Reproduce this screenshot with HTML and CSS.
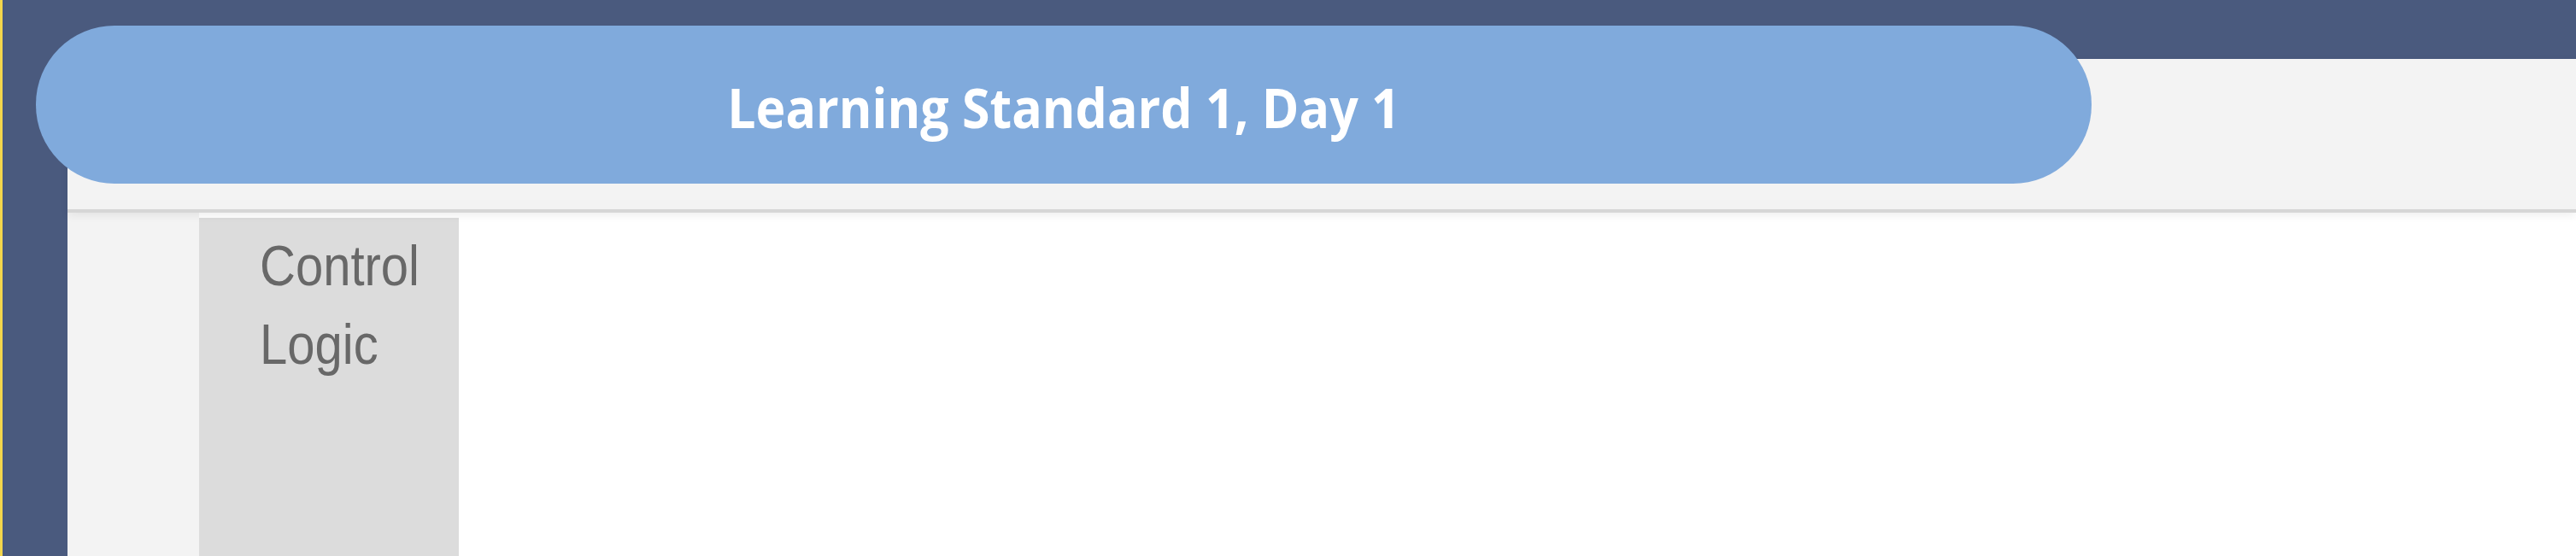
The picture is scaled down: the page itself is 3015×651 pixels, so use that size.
FILE: index.html
```html
<!DOCTYPE html>
<html>
<head>
<meta charset="utf-8">
<link rel="stylesheet" href="styles.css">
</head>
<body>
<div class="app">
  <div class="topbar"></div>
  <div class="frame">
    <div class="header"></div>
    <div class="content">
      <div class="gutter"></div>
      <div class="sidebar">
        <div class="side-list">
          <div class="side-item">Control</div>
          <div class="side-item">Logic</div>
        </div>
      </div>
      <div class="main"></div>
    </div>
  </div>
  <div class="title-pill"><span class="title-text">Learning Standard 1, Day 1</span></div>
</div>
</body>
</html>
```
FILE: styles.css
```css
html, body {
  margin: 0;
  padding: 0;
  height: 100%;
}
body {
  background: #4a5a7e;
  overflow: hidden;
}
.app {
  position: relative;
  height: 651px;
  display: flex;
  flex-direction: column;
  background: #4a5a7e;
  border-left: 3px solid #f3d64c;
  box-sizing: border-box;
}
.topbar {
  height: 69px;
  flex: none;
}
.frame {
  flex: 1;
  margin-left: 76px;
  background: #ffffff;
  display: flex;
  flex-direction: column;
  min-height: 0;
}
.header {
  height: 176px;
  flex: none;
  background: #f3f3f3;
  border-bottom: 4px solid #d6d6d6;
  box-shadow: 0 3px 10px rgba(0, 0, 0, 0.07);
  position: relative;
  z-index: 1;
}
.content {
  flex: 1;
  display: flex;
  min-height: 0;
}
.gutter {
  width: 154px;
  flex: none;
  background: #f3f3f3;
}
.sidebar {
  width: 304px;
  flex: none;
  margin-top: 6px;
  background: #dcdcdc;
  padding: 9px 0 0 71px;
  box-sizing: border-box;
}
.side-list {
  transform: scaleY(1.14);
  transform-origin: top left;
}
.side-item {
  font-family: "Liberation Sans", Arial, sans-serif;
  font-size: 58px;
  line-height: 81px;
  color: #686868;
}
.main {
  flex: 1;
  background: #ffffff;
}
.title-pill {
  position: absolute;
  left: 39px;
  top: 30px;
  width: 2406px;
  height: 185px;
  border-radius: 92px;
  background: #80aadc;
  color: #ffffff;
  font-family: "Open Sans", "Liberation Sans", sans-serif;
  font-weight: 700;
  font-size: 59px;
  display: flex;
  align-items: center;
  justify-content: center;
  padding-top: 4px;
  box-sizing: border-box;
  z-index: 2;
}
.title-text {
  display: inline-block;
  transform: scaleY(1.1);
}
```
